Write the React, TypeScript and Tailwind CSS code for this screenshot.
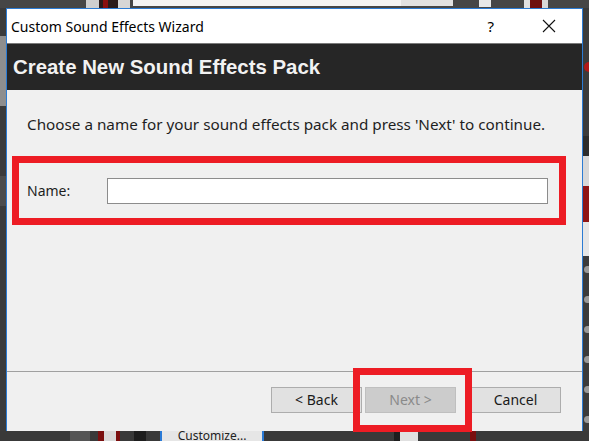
import React from 'react';

const ui = { fontFamily: '"Noto Sans", "Liberation Sans", sans-serif' };

const WizardButton: React.FC<{ label: string; disabled?: boolean }> = ({ label, disabled }) => (
  <button
    disabled={disabled}
    style={ui}
    className={
      disabled
        ? 'w-[91px] h-[26px] bg-[#cccccc] border border-[#bfbfbf] text-[#8a8a8a] text-[14px] leading-none'
        : 'w-[91px] h-[26px] bg-[#e1e1e1] border border-[#adadad] text-[#1a1a1a] text-[14px] leading-none'
    }
  >
    {label}
  </button>
);

const App: React.FC = () => {
  return (
    <div className="w-[589px] h-[441px] overflow-hidden bg-[#3b3b3b] flex flex-col">
      {/* Host app strip above the dialog */}
      <div className="h-[8px] shrink-0 flex bg-[#464646]">
        <div className="w-[86px]" />
        <div className="w-[13px] bg-[#cfcfcf]" />
        <div className="w-[19px] bg-[#2a1a1a] pl-[4px]">
          <div className="w-[5px] h-full bg-[#8a0f0f]" />
        </div>
        <div className="w-[12px] bg-[#d6d6d6]" />
        <div className="w-[3px]" />
        <div className="w-[268px] h-[6px] bg-[#f4f4f4]" />
        <div className="w-[52px] h-[6px] bg-[#e2e2e2]" />
        <div className="w-[26px]" />
        <div className="w-[12px] h-[7px] bg-[#e8e8e8]" />
        <div className="w-[33px]" />
        <div className="w-[6px] bg-[#e0e0e0]" />
        <div className="w-[12px] bg-[#6e1010]" />
        <div className="w-[6px] bg-[#d8d8d8]" />
      </div>

      <div className="flex h-[423px] shrink-0">
        {/* Left edge of the host app */}
        <div className="w-[6px] flex flex-col">
          <div className="h-[28px]" />
          <div className="h-[70px] bg-[#8e8e8e]" />
          <div className="h-[70px]" />
          <div className="h-[30px] bg-[#4c4c4c]" />
        </div>

        {/* Dialog */}
        <div className="relative w-[577px] flex flex-col border-x border-t border-[#2b7bd3] bg-[#f0f0f0]">
          {/* Title bar */}
          <div className="h-[34px] shrink-0 bg-white flex items-center">
            <span style={ui} className="pl-[4px] text-[14px] text-black">
              Custom Sound Effects Wizard
            </span>
            <span style={ui} className="ml-auto mr-[48px] text-[15px] text-black">
              ?
            </span>
            <svg width="14" height="14" viewBox="0 0 14 14" className="mr-[26px]">
              <path d="M1 1 L13 13 M13 1 L1 13" stroke="#111" strokeWidth="1.1" fill="none" />
            </svg>
          </div>

          {/* Header band */}
          <div className="h-[47px] shrink-0 bg-[#262626] border-t border-[#7a7a7a] flex items-center">
            <h1
              style={{ fontFamily: '"Liberation Sans", Arial, sans-serif' }}
              className="pl-[6px] text-[20.4px] font-bold text-[#f2f2f2]"
            >
              Create New Sound Effects Pack
            </h1>
          </div>

          {/* Body */}
          <div className="flex-1 flex flex-col">
            <p style={ui} className="mt-[23px] pl-[20px] text-[15.25px] leading-[22px] text-[#1e1e1e]">
              Choose a name for your sound effects pack and press 'Next' to continue.
            </p>

            <div className="mt-[21px] ml-[5px] w-[554px] h-[69px] border-[7px] border-[#ed1c24] flex items-center">
              <label style={ui} className="pl-[8px] w-[88px] text-[14px] text-[#1e1e1e]">
                Name:
              </label>
              <input
                type="text"
                className="w-[441px] h-[26px] bg-white border border-[#8c8c8c] outline-none"
              />
            </div>

            <div className="mt-auto border-t border-[#a0a0a0]" />
            <div className="h-[59px] shrink-0 flex items-start pt-[15px] pl-[264px] gap-[3px]">
              <WizardButton label="< Back" />
              <WizardButton label="Next >" disabled />
              <div className="ml-[11px]">
                <WizardButton label="Cancel" />
              </div>
            </div>
          </div>

          {/* Red highlight around Next */}
          <div className="absolute left-[346px] top-[359px] w-[119px] h-[64px] border-[7px] border-[#ed1c24]" />
        </div>

        {/* Right edge of the host app */}
        <div className="w-[6px] flex flex-col items-end">
          <div className="h-[54px]" />
          <div className="w-[5px] h-[10px] rounded-l-full bg-[#b01818]" />
          <div className="h-[64px]" />
          <div className="w-[6px] h-[20px] bg-[#2c2c2c]" />
          <div className="w-[6px] h-[30px] bg-[#d8d8d8]" />
          <div className="w-[6px] h-[36px] bg-[#8f1515]" />
          <div className="w-[6px] h-[34px] bg-[#e6e6e6]" />
          <div className="flex flex-col gap-[23px] pt-[10px]">
            {[0, 1, 2, 3, 4, 5].map((i) => (
              <div key={i} className="w-[5px] h-[7px] rounded-l-full bg-[#9a9a9a]" />
            ))}
          </div>
        </div>
      </div>

      {/* Host app strip below the dialog */}
      <div className="h-[10px] shrink-0 flex bg-[#393939]">
        <div className="w-[70px]" />
        <div className="w-[20px] bg-[#555555]" />
        <div className="w-[8px]" />
        <div className="w-[6px] bg-[#7a0f0f]" />
        <div className="w-[12px] bg-[#d9d9d9]" />
        <div className="w-[4px] bg-[#7a0f0f]" />
        <div className="w-[14px]" />
        <div className="w-[12px] bg-[#1e1e1e]" />
        <div className="w-[14px]" />
        <div
          style={ui}
          className="w-[104px] bg-[#e6e6e6] border-x-2 border-[#2a7ad6] overflow-hidden text-[12px] leading-[9px] text-[#222222] text-center"
        >
          Customize...
        </div>
        <div className="w-[130px]" />
        <div className="w-[6px] bg-[#1e1e1e]" />
        <div className="w-[18px] bg-[#e0e0e0]" />
        <div className="w-[52px]" />
        <div className="w-[6px] bg-[#7a0f0f]" />
      </div>
    </div>
  );
};

export default App;
